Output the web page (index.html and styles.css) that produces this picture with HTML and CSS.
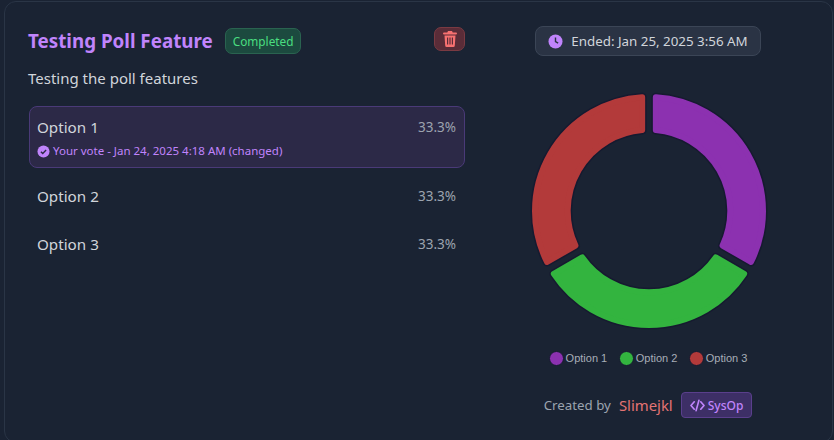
FILE: index.html
```html
<!DOCTYPE html>
<html lang="en">
<head>
  <meta charset="UTF-8" />
  <title>Testing Poll Feature</title>
  <link rel="stylesheet" href="styles.css">
</head>
<body>
  <main class="poll-card">
    <section class="poll-main">
      <div class="poll-head">
        <h1 class="poll-title">Testing Poll Feature</h1>
        <span class="status-badge">Completed</span>
        <button class="delete-btn" aria-label="Delete">
          <svg viewBox="0 0 14 16" width="14" height="16">
            <path class="trash" fill-rule="evenodd" d="M5 0h4l.7 1.5H13a1 1 0 0 1 0 2H1a1 1 0 0 1 0-2h3.300zM1.500 4.500h11l-.7 10a1.500 1.500 0 0 1-1.500 1.500H3.700a1.500 1.500 0 0 1-1.500-1.500zM4 6.500v7h1.200v-7zM6.400 6.500v7h1.200v-7zM8.800 6.500v7H10v-7z"/>
          </svg>
        </button>
      </div>
      <p class="poll-desc">Testing the poll features</p>
      <ul class="options">
        <li class="option voted">
          <div class="option-row">
            <span class="option-name">Option 1</span>
            <span class="option-pct">33.3%</span>
          </div>
          <div class="vote-note">
            <svg viewBox="0 0 14 14" width="13" height="13">
              <circle class="note-disc" cx="7" cy="7" r="6.500"/>
              <path class="note-tick" d="M4.200 7.200l2 2 3.600-3.800"/>
            </svg>
            Your vote - Jan 24, 2025 4:18 AM (changed)
          </div>
        </li>
        <li class="option">
          <div class="option-row">
            <span class="option-name">Option 2</span>
            <span class="option-pct">33.3%</span>
          </div>
        </li>
        <li class="option">
          <div class="option-row">
            <span class="option-name">Option 3</span>
            <span class="option-pct">33.3%</span>
          </div>
        </li>
      </ul>
    </section>

    <aside class="poll-side">
      <div class="ended-pill">
        <svg viewBox="0 0 16 16" width="15" height="15">
          <circle class="clock-disc" cx="8" cy="8" r="7.500"/>
          <path class="clock-hand" d="M8 3.800V8l2.800 1.800"/>
        </svg>
        Ended: Jan 25, 2025 3:56 AM
      </div>
      <svg class="donut" viewBox="-120 -120 240 240" width="240" height="240">
        <defs>
          <path id="segment" d="M6.850 -113.790A114 114 0 0 1 101.970 50.970L73.580 34.570A81.300 81.300 0 0 0 6.850 -81.010Z"/>
        </defs>
        <use href="#segment" class="seg-edge"/>
        <use href="#segment" class="seg-edge" transform="rotate(120)"/>
        <use href="#segment" class="seg-edge" transform="rotate(240)"/>
        <use href="#segment" class="seg seg-purple"/>
        <use href="#segment" class="seg seg-green" transform="rotate(120)"/>
        <use href="#segment" class="seg seg-red" transform="rotate(240)"/>
      </svg>
      <div class="legend">
        <span class="legend-item"><i class="dot dot-purple"></i>Option 1</span>
        <span class="legend-item"><i class="dot dot-green"></i>Option 2</span>
        <span class="legend-item"><i class="dot dot-red"></i>Option 3</span>
      </div>
      <div class="creator">
        <span class="creator-label">Created by</span>
        <span class="creator-name">Slimejkl</span>
        <span class="role-badge">
          <svg viewBox="0 0 16 14" width="15" height="13">
            <path class="code-icon" d="M4.500 3L1 7l3.500 4M11.500 3L15 7l-3.500 4M9.500 1.500l-3 11"/>
          </svg>
          SysOp
        </span>
      </div>
    </aside>
  </main>
</body>
</html>
```

FILE: styles.css
```css
* {
  box-sizing: border-box;
}
html, body {
  margin: 0;
  height: 100%;
  overflow: hidden;
}
body {
  font-family: "Noto Sans", "Open Sans", sans-serif;
  background: #1a2333;
  padding: 1px 1px 0 4px;
}
.poll-card {
  display: grid;
  grid-template-columns: 436px 304px;
  column-gap: 31px;
  height: 442px;
  padding: 24px 32px 0 24px;
  background: #1a2333;
  border: 1px solid #2a3546;
  border-radius: 12px;
}
.poll-head {
  display: flex;
  align-items: center;
  height: 30px;
}
.poll-title {
  margin: 0 12px 0 -1px;
  font-size: 18.800px;
  font-weight: 700;
  color: #c084fc;
}
.status-badge {
  padding: 3px 7px;
  font-size: 11.800px;
  line-height: 18px;
  color: #4ade80;
  background: #1c4a3f;
  border: 1px solid #2a6350;
  border-radius: 7px;
}
.delete-btn {
  display: flex;
  align-items: center;
  justify-content: center;
  width: 31px;
  height: 24px;
  margin: -4px 0 0 auto;
  padding: 0;
  background: #5a2c38;
  border: 1px solid #7a3a42;
  border-radius: 7px;
}
.trash {
  fill: #f87171;
}
.poll-desc {
  margin: 10px 0 0 -1px;
  font-size: 15px;
  line-height: 24px;
  color: #d1d5db;
}
.options {
  display: flex;
  flex-direction: column;
  margin: 16px 0 0;
  padding: 0;
  list-style: none;
}
.option {
  padding: 12px 9px 12px 8px;
  height: 48px;
}
.option.voted {
  height: 62px;
  margin-bottom: 4px;
  padding: 8px 8px 8px 7px;
  background: #2c2947;
  border: 1px solid #4a3a78;
  border-radius: 8px;
}
.option-row {
  display: flex;
  justify-content: space-between;
  align-items: center;
  height: 24px;
}
.option-name {
  font-size: 15.200px;
  color: #d1d5db;
}
.option-pct {
  font-size: 13.500px;
  color: #9ca3af;
}
.vote-note {
  display: flex;
  align-items: center;
  gap: 3px;
  margin-top: 4px;
  font-size: 11.500px;
  line-height: 16px;
  color: #c084fc;
}
.note-disc {
  fill: #c084fc;
}
.note-tick {
  fill: none;
  stroke: #2c2947;
  stroke-width: 1.500;
}
.poll-side {
  display: flex;
  flex-direction: column;
  align-items: center;
}
.ended-pill {
  display: flex;
  align-items: center;
  gap: 8px;
  height: 30px;
  padding: 0 12px;
  font-size: 13.350px;
  color: #d1d5db;
  background: #2a3344;
  border: 1px solid #3b4556;
  border-radius: 8px;
}
.clock-disc {
  fill: #c084fc;
}
.clock-hand {
  fill: none;
  stroke: #2a3344;
  stroke-width: 1.500;
}
.donut {
  margin: 35px 0 0 2px;
}
.seg-edge {
  fill: #161a30;
  stroke: #161a30;
  stroke-width: 9;
  stroke-linejoin: round;
}
.seg {
  stroke-width: 6;
  stroke-linejoin: round;
}
.seg-purple {
  fill: #8c31b0;
  stroke: #8c31b0;
}
.seg-green {
  fill: #33b43f;
  stroke: #33b43f;
}
.seg-red {
  fill: #b33a3a;
  stroke: #b33a3a;
}
.legend {
  display: flex;
  gap: 11.500px;
  margin-top: 18px;
  font-family: "Liberation Sans", Arial, sans-serif;
  font-size: 11px;
  color: #a8aeb8;
}
.legend-item {
  display: flex;
  align-items: center;
  gap: 2px;
  height: 18px;
}
.dot {
  width: 15px;
  height: 15px;
  border-radius: 50%;
  border: 1px solid #161a30;
}
.dot-purple {
  background: #8c31b0;
}
.dot-green {
  background: #33b43f;
}
.dot-red {
  background: #b33a3a;
}
.creator {
  display: flex;
  align-items: center;
  margin-top: 25px;
}
.creator-label {
  font-size: 13.300px;
  color: #9ca3af;
}
.creator-name {
  margin-left: 8px;
  font-size: 14.900px;
  color: #e57373;
}
.role-badge {
  display: flex;
  align-items: center;
  gap: 3px;
  height: 26px;
  margin-left: 8px;
  padding: 0 8px;
  font-size: 12px;
  font-weight: 500;
  color: #c084fc;
  background: #3d2f66;
  border: 1px solid #5a3f8c;
  border-radius: 4px;
}
.code-icon {
  fill: none;
  stroke: #c084fc;
  stroke-width: 1.800;
  stroke-linecap: round;
  stroke-linejoin: round;
}
```
